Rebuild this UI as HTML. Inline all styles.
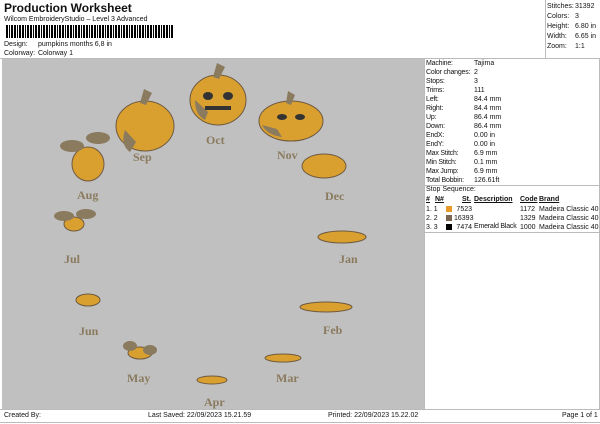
<!DOCTYPE html><html><head><style>
body{margin:0;width:600px;height:424px;background:#fff;font-family:"Liberation Sans",sans-serif;position:relative;overflow:hidden;color:#111}
.a{position:absolute;white-space:nowrap}
.s{font-size:7px}
.bar{position:absolute;top:25px;left:6px;height:13px;width:168px;background:repeating-linear-gradient(90deg,#000 0 2px,#fff 2px 3px,#000 3px 4px,#fff 4px 5px,#000 5px 7px,#fff 7px 8px)}
.lbl{font-family:"Liberation Serif",serif;font-size:12px;fill:#8a7a5e;font-weight:bold}
</style></head><body>
<div class="a" style="left:4px;top:1px;font-size:12px;font-weight:bold">Production Worksheet</div>
<div class="a s" style="left:4px;top:16px">Wilcom EmbroideryStudio – Level 3 Advanced</div>
<div class="bar"></div>
<div class="a s" style="left:4px;top:41px">Design:</div><div class="a s" style="left:38px;top:41px">pumpkins months 6,8 in</div>
<div class="a s" style="left:4px;top:50px">Colorway:</div><div class="a s" style="left:38px;top:50px">Colorway 1</div>
<div class="a" style="left:545px;top:0;width:54px;height:58px;border-left:1px solid #bbb;border-right:1px solid #bbb"></div>
<div class="a s" style="left:547px;top:2px;line-height:10px">Stitches:<br>Colors:<br>Height:<br>Width:<br>Zoom:</div>
<div class="a s" style="left:575px;top:2px;line-height:10px">31392<br>3<br>6.80 in<br>6.65 in<br>1:1</div>
<div class="a" style="left:0;top:58px;width:600px;border-top:1px solid #bbb"></div>
<div class="a" style="left:2px;top:59px;width:422px;height:350px;background:#c0c0c0"></div>
<div class="a" style="left:424px;top:59px;width:174px;height:350px;border-left:1px solid #bbb;border-right:1px solid #bbb"></div>
<div class="a s" style="left:426px;top:59px;line-height:9px;letter-spacing:-0.2px">Machine:<br>Color changes:<br>Stops:<br>Trims:<br>Left:<br>Right:<br>Up:<br>Down:<br>EndX:<br>EndY:<br>Max Stitch:<br>Min Stitch:<br>Max Jump:<br>Total Bobbin:</div>
<div class="a s" style="left:474px;top:59px;line-height:9px">Tajima<br>2<br>3<br>111<br>84.4 mm<br>84.4 mm<br>86.4 mm<br>86.4 mm<br>0.00 in<br>0.00 in<br>6.9 mm<br>0.1 mm<br>6.9 mm<br>126.61ft</div>
<div class="a" style="left:424px;top:185px;width:175px;border-top:1px solid #bbb"></div>
<div class="a s" style="left:426px;top:186px">Stop Sequence:</div>
<div class="a s" style="left:426px;top:196px;font-weight:bold;text-decoration:underline">#</div>
<div class="a s" style="left:435px;top:196px;font-weight:bold;text-decoration:underline">N#</div>
<div class="a s" style="left:462px;top:196px;font-weight:bold;text-decoration:underline">St.</div>
<div class="a s" style="left:474px;top:196px;font-weight:bold;text-decoration:underline">Description</div>
<div class="a s" style="left:520px;top:196px;font-weight:bold;text-decoration:underline">Code</div>
<div class="a s" style="left:539px;top:196px;font-weight:bold;text-decoration:underline">Brand</div>
<div class="a s" style="left:426px;top:205px;line-height:9px">1. 1<br>2. 2<br>3. 3</div>
<div class="a" style="left:446px;top:206px;width:6px;height:6px;background:#e89a2a"></div>
<div class="a" style="left:446px;top:215px;width:6px;height:6px;background:#7a6452"></div>
<div class="a" style="left:446px;top:224px;width:6px;height:6px;background:#000"></div>
<div class="a s" style="left:454px;top:205px;line-height:9px;width:18px;text-align:right">7523<br>16393<br>7474</div>
<div class="a s" style="left:474px;top:223px;letter-spacing:-0.2px">Emerald Black</div>
<div class="a s" style="left:520px;top:205px;line-height:9px">1172<br>1329<br>1000</div>
<div class="a s" style="left:539px;top:205px;line-height:9px">Madeira Classic 40<br>Madeira Classic 40<br>Madeira Classic 40</div>
<div class="a" style="left:424px;top:232px;width:175px;border-top:1px solid #bbb"></div>
<div class="a" style="left:0;top:409px;width:600px;height:12px;border-top:1px solid #bbb;border-bottom:1px solid #bbb"></div>
<div class="a s" style="left:4px;top:412px">Created By:</div>
<div class="a s" style="left:148px;top:412px">Last Saved: 22/09/2023 15.21.59</div>
<div class="a s" style="left:328px;top:412px">Printed: 22/09/2023 15.22.02</div>
<div class="a s" style="left:562px;top:412px">Page 1 of 1</div>
<svg class="a" style="left:0;top:0" width="600" height="424">
<g fill="#d9a030" stroke="#6e5a40" stroke-width="1">
<ellipse cx="145" cy="126" rx="29" ry="25"/><ellipse cx="218" cy="100" rx="28" ry="25"/><ellipse cx="291" cy="121" rx="32" ry="20"/>
<ellipse cx="324" cy="166" rx="22" ry="12"/><ellipse cx="88" cy="164" rx="16" ry="17"/>
<ellipse cx="342" cy="237" rx="24" ry="6"/><ellipse cx="326" cy="307" rx="26" ry="5"/><ellipse cx="283" cy="358" rx="18" ry="4"/>
<ellipse cx="212" cy="380" rx="15" ry="4"/><ellipse cx="140" cy="353" rx="12" ry="6"/><ellipse cx="88" cy="300" rx="12" ry="6"/><ellipse cx="74" cy="224" rx="10" ry="7"/>
</g>
<g fill="#8a7a5e"><path d="M140 103l4-14 8 4-6 12z"/><path d="M213 77l4-14 8 4-6 12z"/><path d="M286 103l2-12 7 4-4 10z"/>
<ellipse cx="72" cy="146" rx="12" ry="6"/><ellipse cx="98" cy="138" rx="12" ry="6"/><ellipse cx="64" cy="216" rx="10" ry="5"/><ellipse cx="86" cy="214" rx="10" ry="5"/><ellipse cx="130" cy="346" rx="7" ry="5"/><ellipse cx="150" cy="350" rx="7" ry="5"/>
<path d="M125 130q-5 15 5 22l6-10z"/><path d="M195 100q0 15 10 20l3-8z"/><path d="M262 125q5 10 20 12l-5-8z"/></g>
<g fill="#333"><ellipse cx="208" cy="96" rx="5" ry="4"/><ellipse cx="228" cy="96" rx="5" ry="4"/><rect x="205" y="106" width="26" height="4"/><ellipse cx="282" cy="117" rx="5" ry="3"/><ellipse cx="300" cy="117" rx="5" ry="3"/></g>
<g class="lbl"><text x="133" y="161">Sep</text><text x="206" y="144">Oct</text><text x="277" y="159">Nov</text><text x="325" y="200">Dec</text><text x="339" y="263">Jan</text><text x="323" y="334">Feb</text><text x="276" y="382">Mar</text><text x="204" y="406">Apr</text><text x="127" y="382">May</text><text x="79" y="335">Jun</text><text x="64" y="263">Jul</text><text x="77" y="199">Aug</text></g>
</svg>
</body></html>
